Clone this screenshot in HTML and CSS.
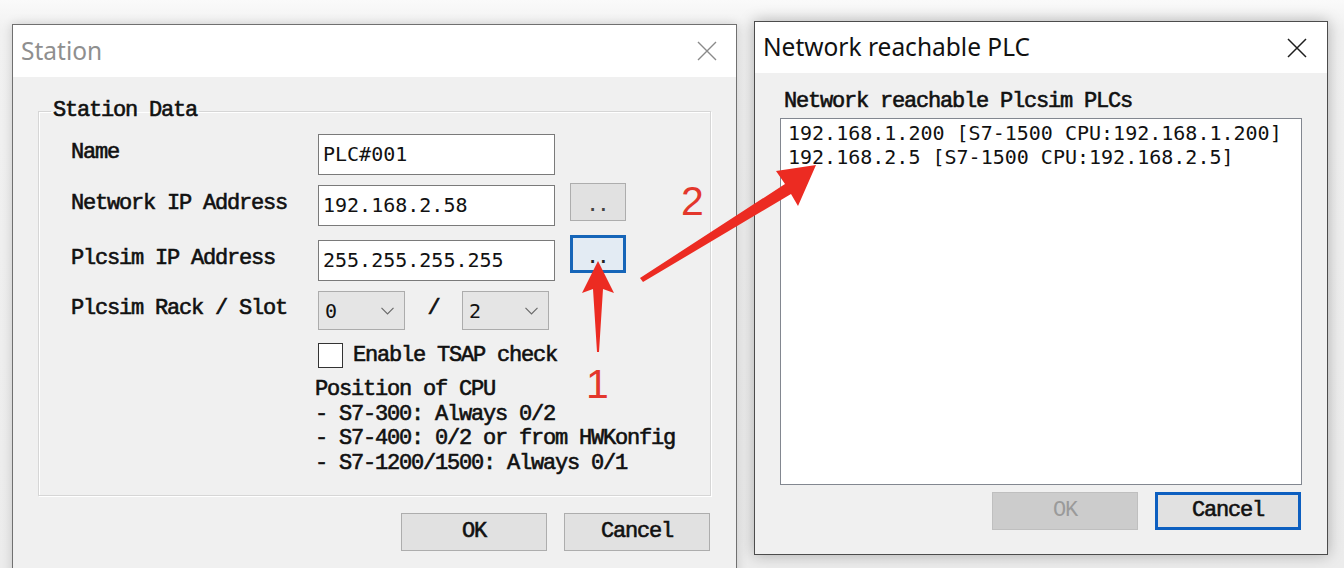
FILE: index.html
```html
<!DOCTYPE html>
<html lang="en">
<head>
<meta charset="utf-8">
<title>Station / Network reachable PLC</title>
<link rel="stylesheet" href="styles.css">
</head>
<body>
<div class="desk">
  <div class="win win-station">
    <div class="titlebar">
      <span class="title inactive">Station</span>
      <svg class="close" width="20" height="20" viewBox="0 0 20 20"><path d="M1 1L19 19M19 1L1 19" stroke="#8a8a8a" stroke-width="1.4" fill="none"/></svg>
    </div>
    <div class="body">
      <fieldset class="group">
        <legend>Station Data</legend>
        <div class="row r-name">
          <span class="lbl">Name</span>
          <div class="field">PLC#001</div>
        </div>
        <div class="row r-net">
          <span class="lbl">Network IP Address</span>
          <div class="field">192.168.2.58</div>
          <div class="dots dots-net">..</div>
        </div>
        <div class="row r-sim">
          <span class="lbl">Plcsim IP Address</span>
          <div class="field">255.255.255.255</div>
          <div class="dots dots-focus">..</div>
        </div>
        <div class="row r-rack">
          <span class="lbl">Plcsim Rack / Slot</span>
          <div class="combo"><span class="cval">0</span><svg width="13" height="8" viewBox="0 0 13 8"><path d="M0.5 0.8L6.5 6.8L12.5 0.8" stroke="#6a6a6a" stroke-width="1.2" fill="none"/></svg></div>
          <span class="slash">/</span>
          <div class="combo"><span class="cval">2</span><svg width="13" height="8" viewBox="0 0 13 8"><path d="M0.5 0.8L6.5 6.8L12.5 0.8" stroke="#6a6a6a" stroke-width="1.2" fill="none"/></svg></div>
        </div>
        <div class="row r-check">
          <span class="lbl"></span>
          <span class="box"></span>
          <span class="check-text">Enable TSAP check</span>
        </div>
        <div class="info">
          <div>Position of CPU</div>
          <div>- S7-300: Always 0/2</div>
          <div>- S7-400: 0/2 or from HWKonfig</div>
          <div>- S7-1200/1500: Always 0/1</div>
        </div>
      </fieldset>
      <div class="actions">
        <div class="btn">OK</div>
        <div class="btn">Cancel</div>
      </div>
    </div>
  </div>

  <div class="win win-plc">
    <div class="titlebar">
      <span class="title">Network reachable PLC</span>
      <svg class="close" width="20" height="20" viewBox="0 0 20 20"><path d="M1 1L19 19M19 1L1 19" stroke="#1e1e1e" stroke-width="1.5" fill="none"/></svg>
    </div>
    <div class="body">
      <div class="list-label">Network reachable Plcsim PLCs</div>
      <div class="listbox">
        <div>192.168.1.200 [S7-1500 CPU:192.168.1.200]</div>
        <div>192.168.2.5 [S7-1500 CPU:192.168.2.5]</div>
      </div>
      <div class="actions plc-actions">
        <div class="btn disabled">OK</div>
        <div class="btn focus">Cancel</div>
      </div>
    </div>
  </div>

  <svg class="annot" width="1344" height="568" viewBox="0 0 1344 568">
    <polygon fill="#ec2b22" points="598,261 614,293 603,289 599,352 597,352 593,289 582,293"/>
    <polygon fill="#ec2b22" points="816,165 798,206 791,194 643,282 640,278 785,184 776,171"/>
  </svg>
  <span class="num num1">1</span>
  <span class="num num2">2</span>
</div>
</body>
</html>
```

FILE: styles.css
```css
* { box-sizing: border-box; }
html, body { margin: 0; padding: 0; }
body {
  width: 1344px;
  height: 568px;
  overflow: hidden;
  background: #efefef;
  font-family: "Liberation Mono", monospace;
  color: #111;
}
.desk {
  position: relative;
  width: 1344px;
  height: 568px;
  background: linear-gradient(#fafafa, #f1f1f1 30px, #ececec);
}

/* shared mono label style */
.group legend,
.lbl,
.slash,
.check-text,
.info,
.btn,
.list-label {
  font-family: "Liberation Mono", monospace;
  font-size: 22px;
  letter-spacing: -1.2px;
  font-weight: normal;
  -webkit-text-stroke: 0.6px currentColor;
}

/* windows */
.win {
  position: absolute;
  background: #f0f0f0;
  display: flex;
  flex-direction: column;
}
.win-station {
  left: 12px;
  top: 24px;
  width: 725px;
  height: 570px;
  border: 1px solid #707070;
  box-shadow: 0 0 10px rgba(0, 0, 0, 0.16);
}
.win-plc {
  left: 754px;
  top: 21px;
  width: 574px;
  height: 534px;
  border: 1px solid #4c4c4c;
  box-shadow: 0 0 14px rgba(0, 0, 0, 0.28);
}
.titlebar {
  flex: none;
  background: #fff;
  display: flex;
  align-items: center;
  justify-content: space-between;
}
.win-station .titlebar { height: 52px; padding: 0 19px 0 8px; }
.win-plc .titlebar { height: 51px; padding: 0 20px 0 8px; }
.title {
  font-family: "Noto Sans", "Open Sans", sans-serif;
  font-size: 24.5px;
  color: #111;
  margin-top: -2px;
}
.title.inactive { color: #8f8f8f; }
.close { display: block; }

/* station body */
.win-station .body {
  padding: 22px 25px 0 25px;
}
.group {
  margin: 0;
  min-width: 0;
  border: 1px solid #d6d6d6;
  box-shadow: inset 1px 1px 0 #fff, 1px 1px 0 #fff;
  padding: 11px 20px 20px 32px;
  height: 397px;
}
.group legend {
  line-height: 24px;
  padding: 0 2px;
  margin-left: -20px;
}
.row {
  display: flex;
  align-items: center;
}
.lbl {
  width: 247px;
  flex: none;
  line-height: 24px;
  margin-top: -4px;
}
.r-name { height: 41px; }
.r-net { height: 41px; margin-top: 10px; }
.r-sim { height: 41px; margin-top: 14px; }
.r-rack { height: 39px; margin-top: 10px; }
.r-check { height: 25px; margin-top: 13px; }

.field {
  width: 237px;
  height: 41px;
  background: #fff;
  border: 1px solid #7a7a7a;
  font-family: "DejaVu Sans Mono", monospace;
  font-size: 20px;
  line-height: 39px;
  padding-left: 4px;
}
.dots {
  width: 56px;
  height: 38px;
  margin-left: 15px;
  align-self: flex-start;
  background: #e1e1e1;
  border: 1px solid #adadad;
  font-family: "DejaVu Sans", sans-serif;
  font-size: 15px;
  font-weight: bold;
  letter-spacing: 5px;
  text-indent: 5px;
  text-align: center;
  line-height: 44px;
  color: #444;
}
.dots-net { margin-top: -2px; }
.dots-focus {
  margin-top: -5px;
  border: 3px solid #1665b8;
  background: #e3ebf3;
  line-height: 40px;
  color: #222;
}
.combo {
  width: 87px;
  height: 39px;
  background: #e5e5e5;
  border: 1px solid #acacac;
  display: flex;
  align-items: center;
  justify-content: space-between;
  padding: 0 10px 0 6px;
}
.cval {
  font-family: "DejaVu Sans Mono", monospace;
  font-size: 20px;
}
.slash {
  width: 57px;
  text-align: center;
  margin-top: -4px;
}
.box {
  width: 25px;
  height: 25px;
  background: #fff;
  border: 1px solid #333;
  flex: none;
}
.check-text {
  margin-left: 10px;
  line-height: 24px;
}
.info {
  margin-top: 10px;
  padding-left: 244px;
  line-height: 24.5px;
}

.actions {
  display: flex;
  justify-content: flex-end;
  gap: 17px;
  margin-top: 17px;
  padding-right: 1px;
}
.btn {
  width: 146px;
  height: 38px;
  background: #e1e1e1;
  border: 1px solid #adadad;
  text-align: center;
  line-height: 36px;
}
.btn.disabled {
  background: #cccccc;
  border-color: #bfbfbf;
  color: #9a9a9a;
  -webkit-text-stroke: 0;
}
.btn.focus {
  border: 3px solid #0d5fc0;
  line-height: 32px;
}

/* plc body */
.win-plc .body {
  padding: 17px 26px 0 25px;
}
.list-label {
  line-height: 24px;
  padding-left: 4px;
}
.listbox {
  margin-top: 4px;
  width: 522px;
  height: 367px;
  background: #fff;
  border: 1px solid #828790;
  padding: 2px 0 0 7px;
  font-family: "DejaVu Sans Mono", monospace;
  font-size: 20px;
  line-height: 24px;
  white-space: nowrap;
}
.plc-actions {
  margin-top: 7px;
  padding-right: 0;
}

/* annotations */
.annot {
  position: absolute;
  left: 0;
  top: 0;
  pointer-events: none;
}
.num {
  position: absolute;
  font-family: "Liberation Sans", sans-serif;
  font-size: 41px;
  line-height: 1;
  color: #e3372c;
}
.num1 { left: 586px; top: 364px; }
.num2 { left: 681px; top: 181px; }
```
